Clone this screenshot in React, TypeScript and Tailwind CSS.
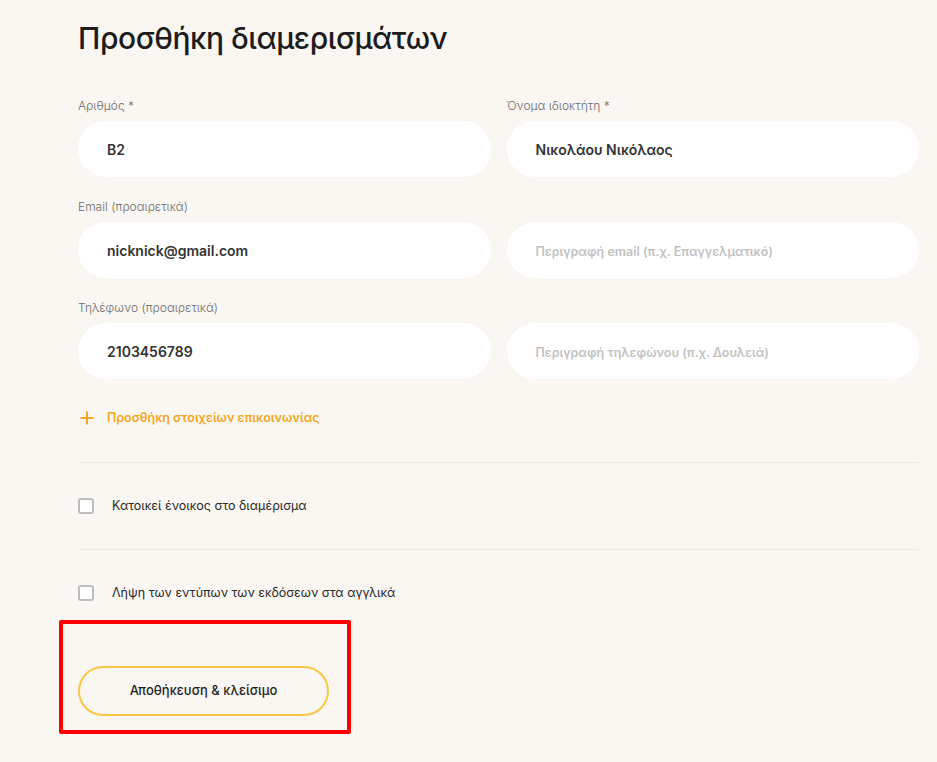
import { useState } from "react";

type Field = {
  label?: string;
  value?: string;
  placeholder?: string;
};

const ROWS: [Field, Field][] = [
  [
    { label: "Αριθμός *", value: "B2" },
    { label: "Όνομα ιδιοκτήτη *", value: "Νικολάου Νικόλαος" },
  ],
  [
    { label: "Email (προαιρετικά)", value: "nicknick@gmail.com" },
    { placeholder: "Περιγραφή email (π.χ. Επαγγελματικό)" },
  ],
  [
    { label: "Τηλέφωνο (προαιρετικά)", value: "2103456789" },
    { placeholder: "Περιγραφή τηλεφώνου (π.χ. Δουλειά)" },
  ],
];

function TextField({ field }: { field: Field }) {
  const [value, setValue] = useState(field.value ?? "");
  return (
    <div className="flex flex-col">
      <label className="h-4 text-[12px] leading-4 text-[#6b6b6b] font-light">
        {field.label ?? ""}
      </label>
      <input
        value={value}
        onChange={(e) => setValue(e.target.value)}
        placeholder={field.placeholder}
        className="mt-[7px] h-14 w-full rounded-full bg-white px-[29px] text-[14px] font-semibold text-[#333] outline-none placeholder:text-[#c2c2c2] placeholder:text-[12.5px]"
      />
    </div>
  );
}

function Check({ label }: { label: string }) {
  const [on, setOn] = useState(false);
  return (
    <label className="flex h-5 cursor-pointer items-center gap-[18px]">
      <span
        onClick={() => setOn((v) => !v)}
        className={
          on
            ? "h-4 w-4 rounded-[3px] border-2 border-[#f4a623] bg-[#f4a623]"
            : "h-4 w-4 rounded-[3px] border-2 border-[#bdbdbd] bg-white"
        }
      />
      <span className="text-[12.5px] text-[#2a2a2a]">{label}</span>
    </label>
  );
}

export default function App() {
  return (
    <div
      className="min-h-[762px] bg-[#faf7f3] px-[78px] pr-[18px]"
      style={{ fontFamily: "Inter, 'Noto Sans', sans-serif" }}
    >
      <h1 className="pt-[19px] text-[30px] font-medium leading-[38px] tracking-[-0.45px] text-[#1c1c1c]">
        Προσθήκη διαμερισμάτων
      </h1>

      <div className="mt-[41px] grid grid-cols-2 gap-x-4 gap-y-[22px]">
        {ROWS.map((row, i) =>
          row.map((f, j) => <TextField key={`${i}-${j}`} field={f} />),
        )}
      </div>

      <button
        type="button"
        className="mt-[29px] flex h-5 items-center gap-[13px] pl-[2px] text-[12.5px] font-semibold text-[#f4a623]"
      >
        <svg width="14" height="14" viewBox="0 0 14 14" fill="none">
          <path
            d="M7 0.5v13M0.5 7h13"
            stroke="currentColor"
            strokeWidth="2"
          />
        </svg>
        Προσθήκη στοιχείων επικοινωνίας
      </button>

      <div className="mt-[34px] border-t border-[#ece8e2]" />
      <div className="py-[33px]">
        <Check label="Κατοικεί ένοικος στο διαμέρισμα" />
      </div>
      <div className="border-t border-[#ece8e2]" />
      <div className="pt-[33px]">
        <Check label="Λήψη των εντύπων των εκδόσεων στα αγγλικά" />
      </div>

      <div className="relative mt-[63px] w-fit">
        <button
          type="button"
          className="flex h-[50px] w-[251px] items-center justify-center rounded-full border-2 border-[#f9c646] text-[13px] font-medium text-[#1f1f1f]"
        >
          Αποθήκευση & κλείσιμο
        </button>
        <div className="pointer-events-none absolute -left-[19px] -top-[46px] h-[114px] w-[292px] rounded-[2px] border-4 border-[#ff0000]" />
      </div>
    </div>
  );
}
